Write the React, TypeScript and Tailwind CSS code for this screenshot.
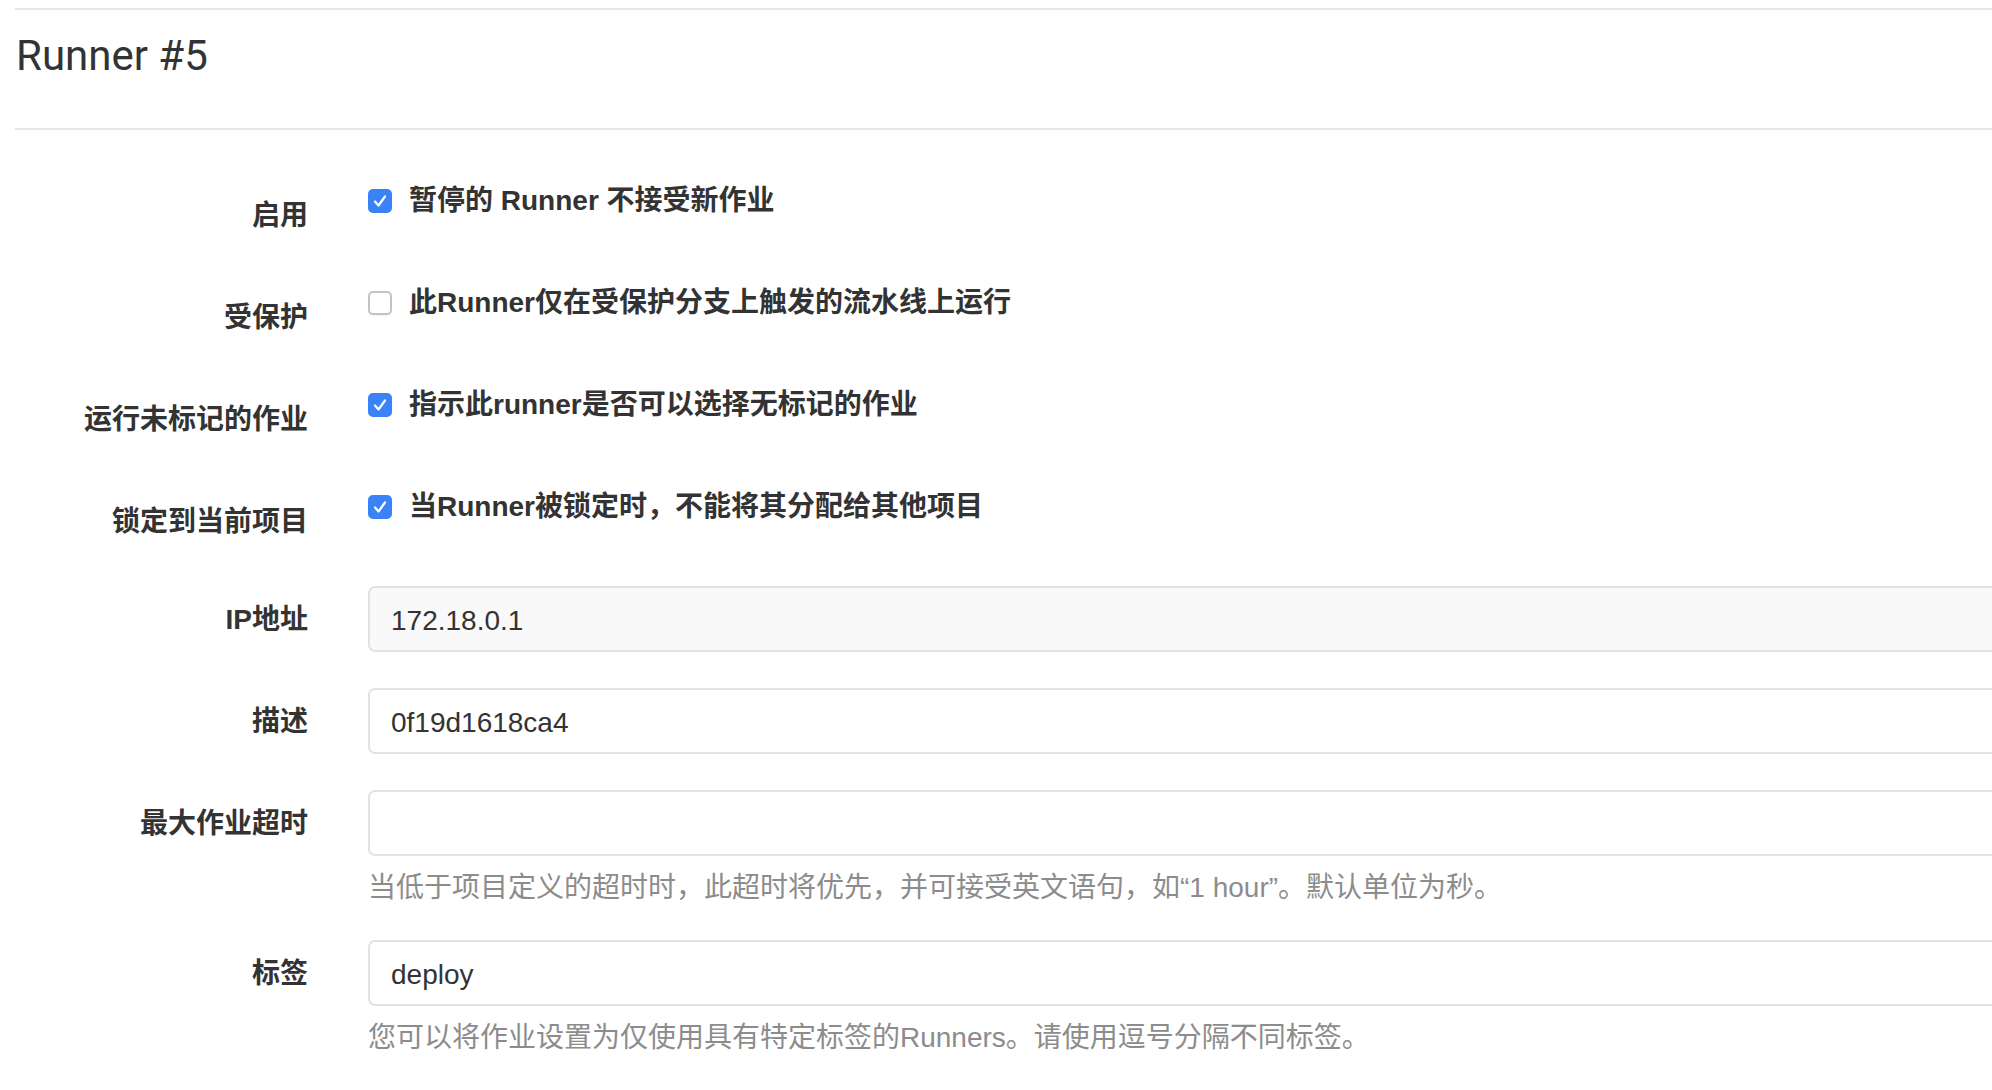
import React from 'react';

const FONT = '"Liberation Sans", "Noto Sans CJK SC", sans-serif';

interface CheckRowProps {
  label: string;
  text: string;
  checked: boolean;
}

const Box: React.FC<{ checked: boolean }> = ({ checked }) =>
  checked ? (
    <span className="flex h-[24px] w-[24px] shrink-0 items-center justify-center rounded-[5px] bg-[#3a82f7]">
      <svg width="24" height="24" viewBox="0 0 24 24" fill="none">
        <path d="M7 12.5 L10.5 16.5 L17 7.5" stroke="white" strokeWidth="2.2" strokeLinecap="round" strokeLinejoin="round" />
      </svg>
    </span>
  ) : (
    <span className="block h-[24px] w-[24px] shrink-0 rounded-[5px] border-2 border-[#c4c4c4] bg-white shadow-[0_1px_1px_rgba(0,0,0,0.06)]" />
  );

const CheckRow: React.FC<CheckRowProps> = ({ label, text, checked }) => (
  <div className="flex h-[102px] items-start">
    <div className="w-[293px] shrink-0 pt-[26px] text-right text-[28px] leading-[40px] font-bold text-[#333]">
      {label}
    </div>
    <div className="ml-[60px] flex items-center gap-[17px] pt-[11px]">
      <Box checked={checked} />
      <span className="text-[28px] leading-[40px] font-semibold text-[#333]">{text}</span>
    </div>
  </div>
);

interface InputRowProps {
  label: string;
  value: string;
  readOnly?: boolean;
  hint?: string;
  hintGap?: string;
}

const InputRow: React.FC<InputRowProps> = ({ label, value, readOnly, hint, hintGap = 'mt-[12px]' }) => (
  <div className="flex items-start">
    <div className="flex h-[66px] w-[293px] shrink-0 items-center justify-end pt-[2px] text-[28px] font-bold text-[#333]">
      {label}
    </div>
    <div className="ml-[60px] flex-1">
      <input
        readOnly
        defaultValue={value}
        className={
          'block h-[66px] w-full rounded-[7px] border-2 border-[#e2e2e2] px-[21px] pt-[3px] text-[28px] text-[#333] outline-none ' +
          (readOnly ? 'bg-[#f9f9f9]' : 'bg-white')
        }
        style={{ fontFamily: FONT }}
      />
      {hint && <div className={hintGap + ' text-[28px] leading-[40px] text-[#8c8c8c]'}>{hint}</div>}
    </div>
  </div>
);

export default function App() {
  return (
    <div className="min-h-screen w-full overflow-hidden bg-white" style={{ fontFamily: FONT }}>
      <div className="w-[2140px] pl-[15px]">
        <div className="mt-[8px] h-[2px] bg-[#e6e6e6]" />
        <h1 className="pt-[22px] pl-[1px] text-[42px] leading-[48px] font-normal text-[#333]" style={{ fontFamily: 'Roboto, "Liberation Sans", sans-serif' }}>
          Runner #5
        </h1>
        <div className="mt-[48px] h-[2px] bg-[#e6e6e6]" />

        <form className="pt-[40px]">
          <CheckRow label="启用" text="暂停的 Runner 不接受新作业" checked />
          <CheckRow label="受保护" text="此Runner仅在受保护分支上触发的流水线上运行" checked={false} />
          <CheckRow label="运行未标记的作业" text="指示此runner是否可以选择无标记的作业" checked />
          <CheckRow label="锁定到当前项目" text="当Runner被锁定时，不能将其分配给其他项目" checked />

          <div className="mt-[8px] flex flex-col gap-[36px]">
            <InputRow label="IP地址" value="172.18.0.1" readOnly />
            <InputRow label="描述" value="0f19d1618ca4" />
            <InputRow
              label="最大作业超时"
              value=""
              hint="当低于项目定义的超时时，此超时将优先，并可接受英文语句，如“1 hour”。默认单位为秒。"
            />
            <div className="-mt-[4px]">
              <InputRow
                label="标签"
                value="deploy"
                hintGap="mt-[12px]"
                hint="您可以将作业设置为仅使用具有特定标签的Runners。请使用逗号分隔不同标签。"
              />
            </div>
          </div>
        </form>
      </div>
    </div>
  );
}
